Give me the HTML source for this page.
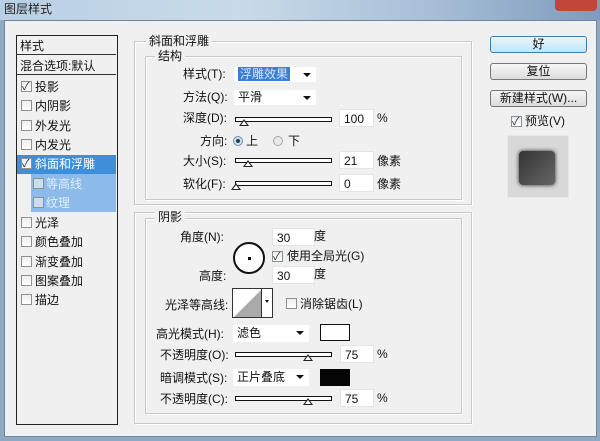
<!DOCTYPE html>
<html><head><meta charset="utf-8"><style>
*{margin:0;padding:0;box-sizing:border-box}
body{width:600px;height:441px;overflow:hidden;background:#8fa9c4;font-family:"Liberation Sans","Noto Sans CJK SC",sans-serif;font-size:12px;color:#111;position:relative}
.a{position:absolute}
.t{position:absolute;white-space:nowrap;line-height:14px}
.box{position:absolute;border:1px solid #c8c8c8;box-shadow:inset 1px 1px 0 #fff,1px 1px 0 #fff}
.lg{position:absolute;background:#f0f0f0;padding:0 3px;line-height:14px}
.inp{position:absolute;background:#fff;border:1px solid #e4e4e4;height:18px;padding:2px 4px;line-height:14px}
.trk{position:absolute;height:5px;border:1px solid #111;background:#fff}
.th{position:absolute;width:0;height:0;border-left:5px solid transparent;border-right:5px solid transparent;border-bottom:7px solid #222}
.th:after{content:"";position:absolute;left:-3px;top:2px;border-left:3px solid transparent;border-right:3px solid transparent;border-bottom:4px solid #fff}
.dd{position:absolute;background:#fff;height:17px;border:1px solid #f0f0f0;padding-left:4px;line-height:15px}
.dd:after{content:"";position:absolute;right:5px;top:6px;border-left:4px solid transparent;border-right:4px solid transparent;border-top:4px solid #111}
.cb{position:absolute;width:11px;height:11px;border:1px solid #8e8f8f;background:linear-gradient(#eee,#fff)}
.ck:after{content:"✓";position:absolute;left:0;top:-4px;font-size:11px;color:#234}
.row{position:absolute;left:17px;width:99px;height:19px;border-bottom:1px solid #fff}
.btn{position:absolute;left:490px;width:97px;height:17px;border:1px solid #777;border-radius:3px;background:linear-gradient(#f6f6f6,#dcdcdc);text-align:center;line-height:15px}
</style></head><body>
<div class="a" style="left:0;top:0;width:600px;height:20px;background:linear-gradient(90deg,#b9cfe4,#c9dbea 40%,#a9c0d8 70%,#7f9bbd)"></div>
<div class="t" style="left:4px;top:2px;font-size:12px;color:#222">图层样式</div>
<div class="a" style="left:555px;top:0;width:42px;height:11px;background:#c4453a;border-radius:0 0 4px 4px"></div>
<div class="a" style="left:4px;top:20px;width:593px;height:417px;background:#f0f0f0;border:1px solid #6f86a2"></div>

<!-- left list -->
<div class="a" style="left:16px;top:35px;width:102px;height:390px;border:1px solid #222;background:#f0f0f0"></div>
<div class="row" style="top:36px;border-bottom:1px solid #333"></div><div class="t" style="left:20px;top:39px">样式</div>
<div class="row" style="top:56px;border-bottom:1px solid #333"></div><div class="t" style="left:20px;top:59px">混合选项:默认</div>
<div class="a" style="left:17px;top:155px;width:99px;height:19px;background:#3d8fd9"></div>
<div class="a" style="left:31px;top:174px;width:85px;height:38px;background:#8cbbe9"></div>
<div class="cb ck" style="left:21px;top:81px"></div><div class="t" style="left:35px;top:80px">投影</div>
<div class="cb" style="left:21px;top:100px"></div><div class="t" style="left:35px;top:99px">内阴影</div>
<div class="cb" style="left:21px;top:120px"></div><div class="t" style="left:35px;top:119px">外发光</div>
<div class="cb" style="left:21px;top:139px"></div><div class="t" style="left:35px;top:138px">内发光</div>
<div class="cb ck" style="left:21px;top:158px"></div><div class="t" style="left:35px;top:157px;color:#fff">斜面和浮雕</div>
<div class="cb" style="left:33px;top:178px;background:#cde"></div><div class="t" style="left:46px;top:177px;color:#dfeeff">等高线</div>
<div class="cb" style="left:33px;top:197px;background:#cde"></div><div class="t" style="left:46px;top:196px;color:#dfeeff">纹理</div>
<div class="cb" style="left:21px;top:217px"></div><div class="t" style="left:35px;top:216px">光泽</div>
<div class="cb" style="left:21px;top:236px"></div><div class="t" style="left:35px;top:235px">颜色叠加</div>
<div class="cb" style="left:21px;top:256px"></div><div class="t" style="left:35px;top:255px">渐变叠加</div>
<div class="cb" style="left:21px;top:275px"></div><div class="t" style="left:35px;top:274px">图案叠加</div>
<div class="cb" style="left:21px;top:294px"></div><div class="t" style="left:35px;top:293px">描边</div>

<!-- group boxes -->
<div class="box" style="left:134px;top:41px;width:338px;height:164px"></div>
<div class="lg" style="left:146px;top:34px">斜面和浮雕</div>
<div class="box" style="left:145px;top:56px;width:317px;height:144px"></div>
<div class="lg" style="left:155px;top:49px">结构</div>
<div class="box" style="left:134px;top:212px;width:338px;height:212px"></div>
<div class="box" style="left:145px;top:218px;width:317px;height:196px"></div>
<div class="lg" style="left:155px;top:210px">阴影</div>

<!-- structure -->
<div class="t" style="left:183px;top:67px">样式(T):</div>
<div class="dd" style="left:233px;top:66px;width:84px"><span style="background:#3b7fd0;color:#cfe5ff;padding:0 2px">浮雕效果</span></div>
<div class="t" style="left:183px;top:90px">方法(Q):</div>
<div class="dd" style="left:233px;top:89px;width:84px">平滑</div>
<div class="t" style="left:183px;top:111px">深度(D):</div>
<div class="trk" style="left:235px;top:117px;width:97px"></div><div class="th" style="left:239px;top:119px"></div>
<div class="inp" style="left:339px;top:109px;width:35px">100</div><div class="t" style="left:377px;top:111px">%</div>
<div class="t" style="left:200px;top:134px">方向:</div>
<div class="a" style="left:233px;top:136px;width:10px;height:10px;border-radius:50%;border:1px solid #6a8fb8;background:radial-gradient(#234 30%,#cde 40%)"></div>
<div class="t" style="left:246px;top:134px">上</div>
<div class="a" style="left:273px;top:136px;width:10px;height:10px;border-radius:50%;border:1px solid #aaa;background:#e8e8e8"></div>
<div class="t" style="left:288px;top:134px">下</div>
<div class="t" style="left:183px;top:154px">大小(S):</div>
<div class="trk" style="left:235px;top:158px;width:97px"></div><div class="th" style="left:243px;top:160px"></div>
<div class="inp" style="left:339px;top:151px;width:35px">21</div><div class="t" style="left:377px;top:154px">像素</div>
<div class="t" style="left:183px;top:177px">软化(F):</div>
<div class="trk" style="left:235px;top:181px;width:97px"></div><div class="th" style="left:231px;top:183px"></div>
<div class="inp" style="left:339px;top:174px;width:35px">0</div><div class="t" style="left:377px;top:177px">像素</div>

<!-- shadow -->
<div class="t" style="left:180px;top:230px">角度(N):</div>
<div class="inp" style="left:272px;top:228px;width:43px">30</div><div class="t" style="left:314px;top:229px">度</div>
<div class="a" style="left:233px;top:242px;width:32px;height:32px;border-radius:50%;border:2px solid #111;background:#fff"></div>
<div class="a" style="left:248px;top:257px;width:3px;height:3px;background:#000"></div>
<div class="cb ck" style="left:272px;top:251px"></div><div class="t" style="left:287px;top:249px">使用全局光(G)</div>
<div class="t" style="left:199px;top:269px">高度:</div>
<div class="inp" style="left:272px;top:266px;width:43px">30</div><div class="t" style="left:314px;top:267px">度</div>
<div class="t" style="left:165px;top:298px">光泽等高线:</div>
<div class="a" style="left:232px;top:288px;width:41px;height:30px;border:1px solid #333;background:#fff"><svg width="30" height="28" style="position:absolute;left:1px;top:0"><polygon points="0,28 28,0 28,28" fill="#aaa"/></svg><div class="a" style="left:28px;top:0;width:1px;height:28px;background:#333"></div><div class="a" style="left:32px;top:11px;border-left:2px solid transparent;border-right:2px solid transparent;border-top:3px solid #111"></div></div>
<div class="cb" style="left:286px;top:298px"></div><div class="t" style="left:300px;top:297px">消除锯齿(L)</div>
<div class="t" style="left:156px;top:327px">高光模式(H):</div>
<div class="dd" style="left:232px;top:324px;width:78px;height:19px;line-height:17px">滤色</div>
<div class="a" style="left:320px;top:324px;width:30px;height:17px;border:1px solid #111;background:#fff"></div>
<div class="t" style="left:160px;top:348px">不透明度(O):</div>
<div class="trk" style="left:235px;top:352px;width:97px"></div><div class="th" style="left:303px;top:354px"></div>
<div class="inp" style="left:340px;top:345px;width:34px">75</div><div class="t" style="left:377px;top:347px">%</div>
<div class="t" style="left:160px;top:371px">暗调模式(S):</div>
<div class="dd" style="left:232px;top:368px;width:78px;height:19px;line-height:17px">正片叠底</div>
<div class="a" style="left:320px;top:369px;width:30px;height:17px;background:#050505"></div>
<div class="t" style="left:160px;top:392px">不透明度(C):</div>
<div class="trk" style="left:235px;top:396px;width:97px"></div><div class="th" style="left:303px;top:398px"></div>
<div class="inp" style="left:340px;top:389px;width:34px">75</div><div class="t" style="left:377px;top:391px">%</div>

<!-- buttons -->
<div class="btn" style="top:36px;border-color:#3c7fb1;background:linear-gradient(#eaf6fd,#bee6fd)">好</div>
<div class="btn" style="top:63px">复位</div>
<div class="btn" style="top:90px">新建样式(W)...</div>
<div class="cb ck" style="left:511px;top:116px"></div><div class="t" style="left:525px;top:114px">预览(V)</div>
<div class="a" style="left:507px;top:135px;width:62px;height:63px;background:#d8d8d8;border:1px solid #e8e8e8"></div>
<div class="a" style="left:519px;top:151px;width:36px;height:34px;background:#555;border-radius:4px;box-shadow:0 0 4px #222;background:linear-gradient(135deg,#333,#666)"></div>
</body></html>
